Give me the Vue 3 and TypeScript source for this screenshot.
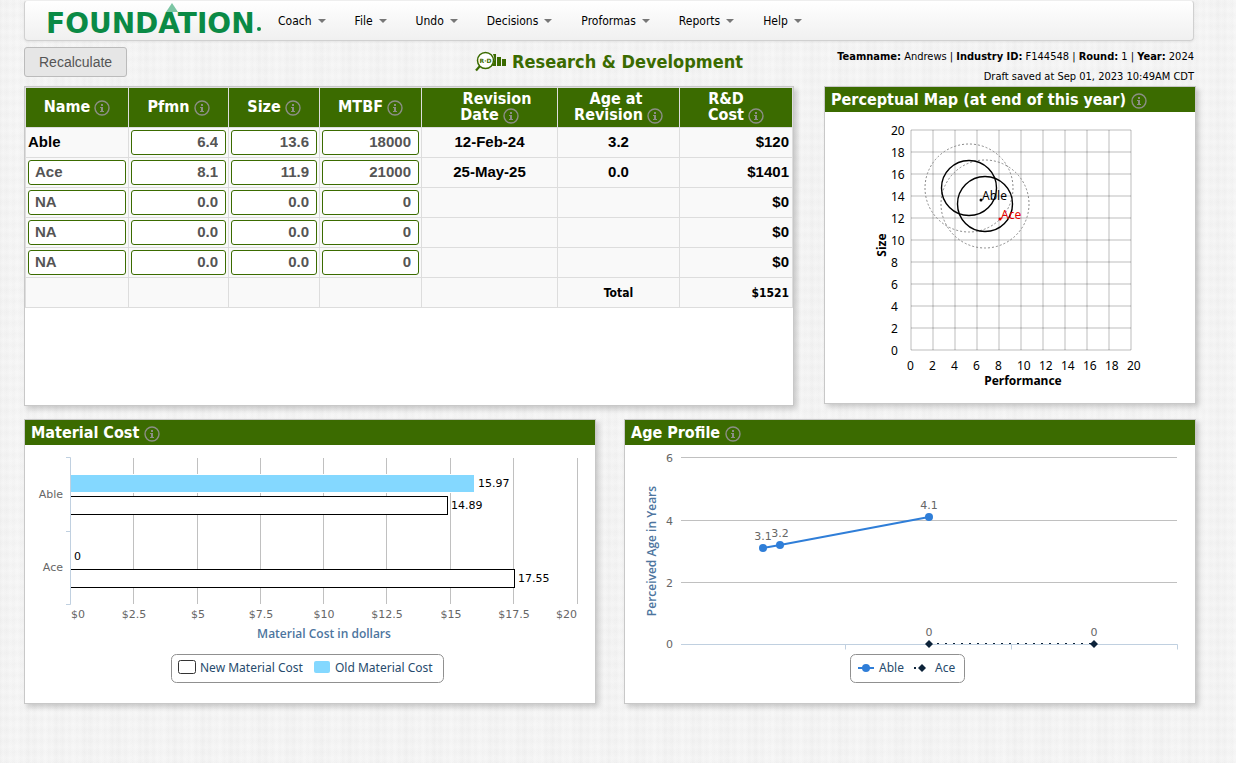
<script setup lang="ts">
interface Column { key: string; lines: string[]; width: number }
interface Product {
  name: string
  fixed?: boolean
  pfmn: string
  size: string
  mtbf: string
  date: string
  age: string
  cost: string
}

const menus: string[] = ['Coach', 'File', 'Undo', 'Decisions', 'Proformas', 'Reports', 'Help']

const columns: Column[] = [
  { key: 'name', lines: ['Name'], width: 104 },
  { key: 'pfmn', lines: ['Pfmn'], width: 100 },
  { key: 'size', lines: ['Size'], width: 91 },
  { key: 'mtbf', lines: ['MTBF'], width: 102 },
  { key: 'date', lines: ['\u00a0\u00a0\u00a0Revision', 'Date'], width: 136 },
  { key: 'age', lines: ['Age at\u00a0', 'Revision'], width: 122 },
  { key: 'cost', lines: ['R&D\u00a0\u00a0\u00a0\u00a0', 'Cost'], width: 113 },
]

const products: Product[] = [
  { name: 'Able', fixed: true, pfmn: '6.4', size: '13.6', mtbf: '18000', date: '12-Feb-24', age: '3.2', cost: '$120' },
  { name: 'Ace', pfmn: '8.1', size: '11.9', mtbf: '21000', date: '25-May-25', age: '0.0', cost: '$1401' },
  { name: 'NA', pfmn: '0.0', size: '0.0', mtbf: '0', date: '', age: '', cost: '$0' },
  { name: 'NA', pfmn: '0.0', size: '0.0', mtbf: '0', date: '', age: '', cost: '$0' },
  { name: 'NA', pfmn: '0.0', size: '0.0', mtbf: '0', date: '', age: '', cost: '$0' },
]

const steps: number[] = Array.from({ length: 11 }, (_, i) => i)

const costTicks = [
  { x: 108, label: '$2.5' }, { x: 172, label: '$5' }, { x: 235, label: '$7.5' }, { x: 298, label: '$10' },
  { x: 361, label: '$12.5' }, { x: 425, label: '$15' }, { x: 488, label: '$17.5' },
]
const costLines: number[] = [...costTicks.map((t) => t.x), 552]

const ageTicks = [{ y: 12, label: '6' }, { y: 75, label: '4' }, { y: 137, label: '2' }]
const agePoints = [{ x: 138, y: 103, label: '3.1' }, { x: 155, y: 100, label: '3.2' }, { x: 304, y: 72, label: '4.1' }]
const acePoints: number[] = [304, 469]
</script>

<template>
  <svg class="defs" width="0" height="0" aria-hidden="true">
    <symbol id="info" viewBox="0 0 16 16">
      <circle cx="8" cy="8" r="7" fill="none" stroke="#8c8f86" stroke-width="1.4" />
      <path d="M7 4h2v2H7zM6 7h3v4h1v1H6v-1h1V8H6z" fill="#8c8f86" />
    </symbol>
  </svg>
  <div class="page">
    <nav class="navbar">
      <a class="brand" href="#" aria-label="Foundation">
        <svg width="218" height="40" viewBox="0 0 218 40">
          <path d="M126 2l6 9h-12z" fill="#7cc6a4" />
          <text class="wordmark" x="0" y="32">FOUNDATION</text>
          <circle cx="213" cy="28" r="2" fill="#0a8a45" />
        </svg>
      </a>
      <button v-for="m in menus" :key="m" type="button" class="menu">{{ m }}<span class="caret"></span></button>
    </nav>

    <header class="bar">
      <button type="button" class="recalc">Recalculate</button>
      <h1>
        <svg width="32" height="22" viewBox="0 0 32 22" aria-hidden="true">
          <circle cx="10.500" cy="9.500" r="8" fill="#fff" stroke="#3b6b00" stroke-width="1.5" />
          <path d="M5 15l-4 4.500" stroke="#3b6b00" stroke-width="2.2" />
          <text class="rd" x="10.500" y="12">R·D</text>
          <path d="M18 3h3v12h-4q4-6 1-12zM22 6h4v9h-4zM27 8h4v7h-4z" fill="#3b6b00" />
        </svg>
        Research &amp; Development
      </h1>
      <div class="meta">
        <div><b>Teamname:</b> Andrews | <b>Industry ID:</b> F144548 | <b>Round:</b> 1 | <b>Year:</b> 2024</div>
        <div>Draft saved at Sep 01, 2023 10:49AM CDT</div>
      </div>
    </header>

    <main>
      <div class="row top">
        <section class="card decisions">
          <table>
            <colgroup>
              <col v-for="c in columns" :key="c.key" :style="{ width: c.width + 'px' }" />
            </colgroup>
            <thead>
              <tr>
                <th v-for="c in columns" :key="c.key" scope="col">
                  <template v-for="(l, i) in c.lines" :key="l"><br v-if="i > 0" />{{ l }}</template>
                  <button type="button" class="info" :aria-label="'About ' + c.key"><svg width="16" height="16"><use href="#info" /></svg></button>
                </th>
              </tr>
            </thead>
            <tbody>
              <tr v-for="(p, i) in products" :key="i">
                <td>
                  <template v-if="p.fixed">{{ p.name }}</template>
                  <input v-else type="text" :value="p.name" aria-label="Name" />
                </td>
                <td><input class="num" type="text" :value="p.pfmn" :aria-label="p.name + ' performance'" /></td>
                <td><input class="num" type="text" :value="p.size" :aria-label="p.name + ' size'" /></td>
                <td><input class="num" type="text" :value="p.mtbf" :aria-label="p.name + ' MTBF'" /></td>
                <td class="mid">{{ p.date }}</td>
                <td class="mid">{{ p.age }}</td>
                <td class="end">{{ p.cost }}</td>
              </tr>
            </tbody>
            <tfoot>
              <tr>
                <td></td><td></td><td></td><td></td><td></td>
                <td class="mid">Total</td>
                <td class="end">$1521</td>
              </tr>
            </tfoot>
          </table>
        </section>

        <section class="card">
          <h2>Perceptual Map (at end of this year)
            <button type="button" class="info" aria-label="About the perceptual map"><svg width="16" height="16"><use href="#info" /></svg></button>
          </h2>
          <svg class="chart map" viewBox="0 0 370 291" role="img" aria-label="Perceptual map">
            <g stroke="#000" stroke-opacity="0.13" stroke-width="2">
              <line v-for="s in steps" :key="'v' + s" :x1="86 + s * 22" :x2="86 + s * 22" y1="18" y2="238" />
              <line v-for="s in steps" :key="'h' + s" x1="86" x2="306" :y1="18 + s * 22" :y2="18 + s * 22" />
            </g>
            <text v-for="s in steps" :key="'y' + s" x="66" :y="243 - s * 22">{{ s * 2 }}</text>
            <text v-for="s in steps" :key="'x' + s" :x="82 + s * 22" y="258">{{ s * 2 }}</text>
            <text class="bold c" x="198" y="273">Performance</text>
            <text class="bold c" transform="translate(61 133) rotate(-90)">Size</text>
            <g fill="none" stroke="#888" stroke-dasharray="2 2">
              <circle cx="144" cy="76" r="44" />
              <circle cx="160" cy="92" r="44" />
            </g>
            <g fill="none" stroke="#000" stroke-width="1.4">
              <circle cx="144" cy="76" r="27.500" />
              <circle cx="160" cy="92" r="27.500" />
            </g>
            <circle cx="156" cy="88" r="1.500" />
            <text x="157" y="88">Able</text>
            <g fill="#e60000">
              <circle cx="175" cy="107" r="1.500" />
              <text x="176" y="107">Ace</text>
            </g>
          </svg>
        </section>
      </div>

      <div class="row bottom">
        <section class="card">
          <h2>Material Cost
            <button type="button" class="info" aria-label="About material cost"><svg width="16" height="16"><use href="#info" /></svg></button>
          </h2>
          <svg class="chart small" viewBox="0 0 570 258" role="img" aria-label="Material cost by product">
            <g stroke="#c0c0c0">
              <line v-for="x in costLines" :key="x" :x1="x + 0.5" :x2="x + 0.5" y1="13" y2="159" />
            </g>
            <rect x="46" y="29" width="404" height="19" fill="#fff" />
            <rect x="46" y="30" width="403" height="17" fill="#84d8ff" />
            <g fill="#fff" stroke="#000">
              <rect x="45.500" y="51.500" width="377" height="18" />
              <rect x="45.500" y="124.500" width="444" height="18" />
            </g>
            <path d="M41 12.500h4.500v147H41M41 86.500h4" fill="none" stroke="#c0d0e0" />
            <g class="black">
              <text x="453" y="42">15.97</text>
              <text x="426" y="64">14.89</text>
              <text x="49" y="115">0</text>
              <text x="493" y="137">17.55</text>
            </g>
            <text class="e" x="38" y="53">Able</text>
            <text class="e" x="38" y="126">Ace</text>
            <text x="46" y="173">$0</text>
            <text v-for="t in costTicks" :key="t.x" class="c" :x="t.x + 1" y="173">{{ t.label }}</text>
            <text class="e" x="552" y="173">$20</text>
            <text class="axis c" x="299" y="193">Material Cost in dollars</text>
            <rect x="146.500" y="209.500" width="272" height="28" rx="5" fill="#fff" stroke="#909090" />
            <rect x="153.500" y="215.500" width="17" height="13" rx="2" fill="#fff" stroke="#333" />
            <text class="legend" x="175" y="227">New Material Cost</text>
            <rect x="289" y="216" width="16" height="12" rx="2" fill="#84d8ff" />
            <text class="legend" x="310" y="227">Old Material Cost</text>
          </svg>
        </section>

        <section class="card">
          <h2>Age Profile
            <button type="button" class="info" aria-label="About the age profile"><svg width="16" height="16"><use href="#info" /></svg></button>
          </h2>
          <svg class="chart small" viewBox="0 0 570 258" role="img" aria-label="Perceived age by product">
            <g v-for="t in ageTicks" :key="t.y">
              <line x1="56" x2="552" :y1="t.y + 0.5" :y2="t.y + 0.5" stroke="#c0c0c0" />
              <text class="e" x="48" :y="t.y + 5">{{ t.label }}</text>
            </g>
            <path d="M56 199.500h496.500v5M220.500 199.500v5M386.500 199.500v5" fill="none" stroke="#c0d0e0" />
            <text class="e" x="48" y="203">0</text>
            <text class="axis c" transform="translate(31 106) rotate(-90)">Perceived Age in Years</text>
            <polyline points="138,103 155,100 304,72" fill="none" stroke="#2f7ed8" stroke-width="2" />
            <g v-for="p in agePoints" :key="p.x">
              <circle :cx="p.x" :cy="p.y" r="4" fill="#2f7ed8" />
              <text class="c" :x="p.x" :y="p.y - 8">{{ p.label }}</text>
            </g>
            <line x1="304" x2="469" y1="198.500" y2="198.500" stroke="#0d233a" stroke-dasharray="2 6" />
            <g v-for="x in acePoints" :key="x">
              <path :d="`M${x} 195l4 4-4 4-4-4z`" fill="#0d233a" />
              <text class="c" :x="x" y="191">0</text>
            </g>
            <rect x="225.500" y="209.500" width="114" height="28" rx="5" fill="#fff" stroke="#909090" />
            <path d="M233 223h16" stroke="#2f7ed8" stroke-width="2" />
            <circle cx="241" cy="223" r="4" fill="#2f7ed8" />
            <text class="legend" x="254" y="227">Able</text>
            <path d="M289 222h2v2h-2zM297 219l4 4-4 4-4-4z" fill="#0d233a" />
            <text class="legend" x="310" y="227">Ace</text>
          </svg>
        </section>
      </div>
    </main>
  </div>
</template>

<style>
html {
  min-height: 100%;
  background-color: #f3f3f3;
  background-image:
    repeating-linear-gradient(90deg, rgba(0, 0, 0, 0.008), rgba(255, 255, 255, 0.16) 3px, rgba(0, 0, 0, 0.008) 7px),
    repeating-linear-gradient(0deg, rgba(0, 0, 0, 0.008), rgba(255, 255, 255, 0.16) 5px, rgba(0, 0, 0, 0.008) 11px),
    repeating-linear-gradient(90deg, rgba(0, 0, 0, 0.008), rgba(255, 255, 255, 0.16) 17px, rgba(0, 0, 0, 0.008) 29px);
}
</style>

<style scoped>
.defs {
  position: absolute;
}
.page {
  padding: 0 40px 24px 24px;
  font: 11px/20px "DejaVu Sans Condensed", "DejaVu Sans", sans-serif;
  color: #000;
}
button {
  font: inherit;
  color: inherit;
  background: none;
  border: 0;
  padding: 0;
  cursor: pointer;
}
.navbar {
  box-sizing: border-box;
  height: 41px;
  margin-right: 2px;
  padding-left: 21px;
  display: flex;
  align-items: center;
  background: linear-gradient(#fff, #f0f0f0);
  border: 1px solid #d0d0d0;
  border-top-color: #eee;
  border-radius: 4px;
  box-shadow: 0 1px 3px rgba(0, 0, 0, 0.08);
}
.brand {
  height: 40px;
}
.wordmark {
  font: bold 28px "DejaVu Sans", sans-serif;
  fill: #0a8a45;
}
.menu {
  padding: 0 15px 0 14px;
  font-size: 12px;
  display: flex;
  align-items: center;
  gap: 6px;
}
.caret {
  border: 4px solid transparent;
  border-top-color: #777;
  border-bottom: 0;
}
.bar {
  display: grid;
  grid-template-columns: 1fr auto 1fr;
  padding: 5px 2px 0 0;
}
.recalc {
  justify-self: start;
  align-self: start;
  box-sizing: border-box;
  height: 30px;
  margin-top: 1px;
  padding: 0 14px;
  font: 14px "Liberation Sans", Arial, sans-serif;
  color: #555;
  background: #e6e6e6;
  border: 1px solid #bbb;
  border-radius: 3px;
}
h1 {
  margin: 0;
  height: 32px;
  display: flex;
  align-items: center;
  gap: 5px;
  font-size: 18px;
  color: #3b6b00;
}
.rd {
  font: bold 6px "DejaVu Sans", sans-serif;
  text-anchor: middle;
  fill: #3b6b00;
}
.meta {
  height: 39px;
  padding-top: 1px;
  text-align: right;
}
.row {
  display: grid;
  align-items: start;
}
.top {
  grid-template-columns: 770fr 372fr;
  gap: 30px;
}
.bottom {
  grid-template-columns: 1fr 1fr;
  gap: 28px;
  margin-top: 13px;
}
.card {
  background: #fff;
  border: 1px solid #c8c8c8;
  box-shadow: 3px 3px 5px rgba(0, 0, 0, 0.18);
}
.decisions {
  min-height: 318px;
}
h2 {
  margin: 0;
  padding-left: 6px;
  height: 25px;
  line-height: 25px;
  font-size: 16px;
  color: #fff;
  background: #3b6b00;
}
.info {
  height: 16px;
  line-height: 16px;
  vertical-align: -4px;
}
th .info {
  margin-left: 4px;
}
.info svg {
  display: block;
}
.chart {
  display: block;
  width: 100%;
}
.map text {
  font: 12px "Noto Sans", sans-serif;
}
.map .bold {
  font-weight: bold;
}
.small text {
  font: 11px "DejaVu Sans", sans-serif;
  fill: #666;
}
.small .black text {
  fill: #000;
}
.small .axis {
  font: 600 12px "Open Sans", sans-serif;
  fill: #4d759e;
}
.small .legend {
  font: 12px "Noto Sans", sans-serif;
  fill: #274b6d;
}
.c {
  text-anchor: middle;
}
.e {
  text-anchor: end;
}
table {
  width: 100%;
  table-layout: fixed;
  border-collapse: separate;
  border-spacing: 0;
  border-top: 1px solid #ddd;
}
th,
td {
  box-sizing: border-box;
  border-right: 1px solid #ddd;
  border-bottom: 1px solid #ddd;
}
th:first-child,
td:first-child {
  border-left: 1px solid #ddd;
}
th {
  height: 40px;
  padding: 0;
  font-size: 16px;
  line-height: 16px;
  color: #fff;
  background: #3b6b00;
}
td {
  height: 30px;
  padding: 0 2px;
  font: bold 15px/20px "Liberation Sans", Arial, sans-serif;
  background: #f9f9f9;
}
tbody td {
  padding-bottom: 1px;
}
tfoot td {
  font: bold 12px/20px "DejaVu Sans Condensed", "DejaVu Sans", sans-serif;
}
.mid {
  text-align: center;
}
.end {
  padding-right: 3px;
  text-align: right;
}
input {
  display: block;
  box-sizing: border-box;
  width: 100%;
  height: 25px;
  padding: 0 7px 2px 6px;
  font: inherit;
  color: #555;
  background: #fff;
  border: 1px solid #3b6b00;
  border-radius: 3px;
}
.num {
  text-align: right;
}
</style>
